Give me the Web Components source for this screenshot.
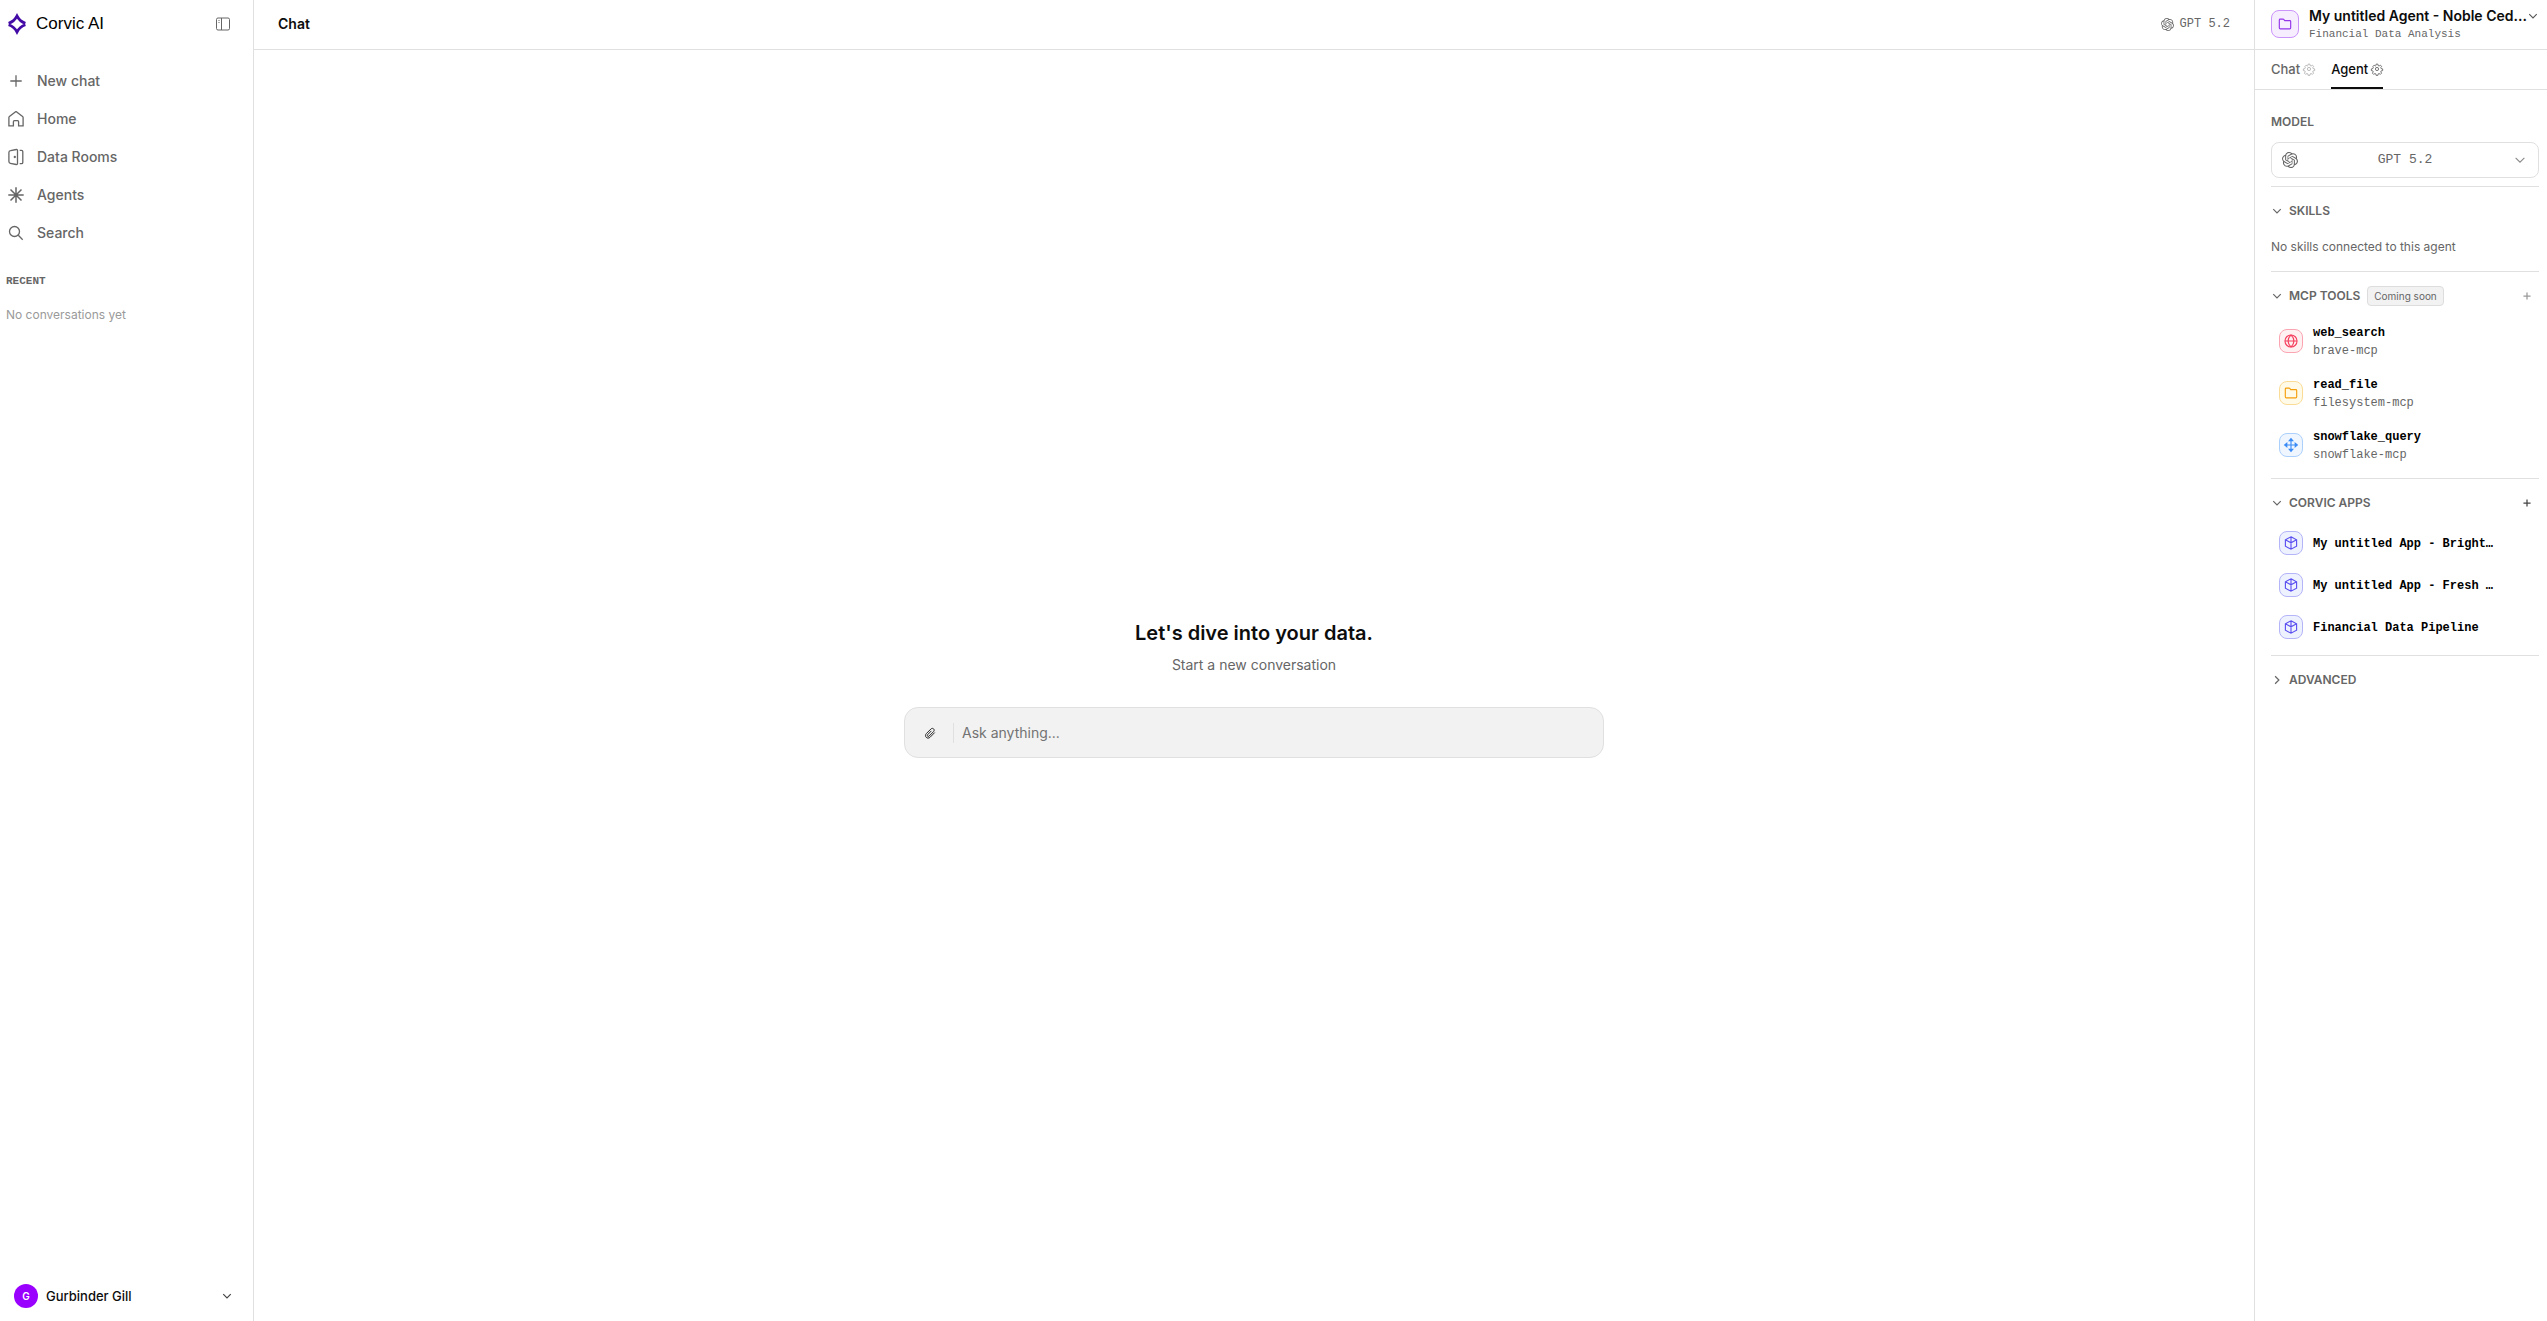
<!DOCTYPE html>
<html lang="en">
<head>
<meta charset="utf-8">
<meta name="viewport" content="width=device-width, initial-scale=1">
<title>Corvic AI</title>
<style>
  :root {
    --ink: #0d0d0d;
    --muted: #666;
    --faint: #9a9a9a;
    --line: #e0e0e0;
    --mono: "Liberation Mono", monospace;
  }
  body {
    margin: 0;
    color: var(--ink);
    background: #fff;
    font-family: Inter, "Liberation Sans", sans-serif;
    font-size: 14px;
    line-height: 20px;
  }
</style>
</head>
<body>
<corvic-app></corvic-app>

<script>
const OPENAI = `<path fill="currentColor" stroke="none" d="M22.2819 9.8211a5.9847 5.9847 0 0 0-.5157-4.9108 6.0462 6.0462 0 0 0-6.5098-2.9A6.0651 6.0651 0 0 0 4.9807 4.1818a5.9847 5.9847 0 0 0-3.9977 2.9 6.0462 6.0462 0 0 0 .7427 7.0966 5.98 5.98 0 0 0 .511 4.9107 6.051 6.051 0 0 0 6.5146 2.9001A5.9847 5.9847 0 0 0 13.2599 24a6.0557 6.0557 0 0 0 5.7718-4.2058 5.9894 5.9894 0 0 0 3.9977-2.9001 6.0557 6.0557 0 0 0-.7475-7.0729zm-9.022 12.6081a4.4755 4.4755 0 0 1-2.8764-1.0408l.1419-.0804 4.7783-2.7582a.7948.7948 0 0 0 .3927-.6813v-6.7369l2.02 1.1686a.071.071 0 0 1 .038.052v5.5826a4.504 4.504 0 0 1-4.4945 4.4944zm-9.6607-4.1254a4.4708 4.4708 0 0 1-.5346-3.0137l.142.0852 4.783 2.7582a.7712.7712 0 0 0 .7806 0l5.8428-3.3685v2.3324a.0804.0804 0 0 1-.0332.0615L9.74 19.9502a4.4992 4.4992 0 0 1-6.1408-1.6464zM2.3408 7.8956a4.485 4.485 0 0 1 2.3655-1.9728V11.6a.7664.7664 0 0 0 .3879.6765l5.8144 3.3543-2.0201 1.1685a.0757.0757 0 0 1-.071 0l-4.8303-2.7865A4.504 4.504 0 0 1 2.3408 7.872zm16.5963 3.8558L13.1038 8.364 15.1192 7.2a.0757.0757 0 0 1 .071 0l4.8303 2.7913a4.4944 4.4944 0 0 1-.6765 8.1042v-5.6772a.79.79 0 0 0-.407-.667zm2.0107-3.0231l-.142-.0852-4.7735-2.7818a.7759.7759 0 0 0-.7854 0L9.409 9.2297V6.8974a.0662.0662 0 0 1 .0284-.0615l4.8303-2.7866a4.4992 4.4992 0 0 1 6.6802 4.66zM8.3065 12.863l-2.02-1.1638a.0804.0804 0 0 1-.038-.0567V6.0742a4.4992 4.4992 0 0 1 7.3757-3.4537l-.142.0805L8.704 5.459a.7948.7948 0 0 0-.3927.6813zm1.0976-2.3654l2.602-1.4998 2.6069 1.4998v2.9994l-2.5974 1.4997-2.6067-1.4997Z"/>`;

// [viewBox size, markup]
const ICONS = {
  logo: [20, `<g fill="none" stroke="#430ba5" stroke-width="2.7"><path d="M1.6 9.300C5.500 8 8 5.800 10 2c2 3.800 4.500 6 8.400 7.300"/><path d="M1.600 10.700C5.500 12 8 14.200 10 18c2-3.800 4.500-6 8.400-7.300"/></g>`],
  panel: [16, `<rect x="1.5" y="2" width="13" height="12" rx="1.5"/><path d="M6.5 2v12M3.5 4.5h1M3.5 6.5h1"/>`],
  plus: [16, `<path d="M8 2.3v11.4M2.3 8h11.4"/>`],
  home: [16, `<path d="M.9 14.9V6.6Q.9 6 1.4 5.6L7.3.9Q8 .4 8.7.9l5.9 4.7q.5.4.5 1v8.3h-4.5v-4.2q0-1-1-1H6.4q-1 0-1 1v4.200z"/>`],
  door: [16, `<path d="M2.600 1.700 8.300.5q1.200-.2 1.200 1v13q0 1.200-1.200 1L2.300 14.300Q.9 14 .9 12.600V3.400Q.9 2 2.600 1.700z"/><path d="M11.700 1.300h1.800q1.300 0 1.300 1.300v10.800q0 1.300-1.300 1.300h-1.800"/><circle cx="6.800" cy="8" r=".5" fill="currentColor"/>`],
  spark: [16, `<path stroke-width="1.5" d="M8 .3v15.400M.3 8h15.400M2.500 2.500l11 11M13.500 2.500l-11 11"/>`],
  search: [16, `<circle cx="6.500" cy="6.500" r="5"/><path d="m10.300 10.300 4.400 4.400"/>`],
  down: [16, `<path d="m3 5.500 5 5 5-5"/>`],
  right: [16, `<path d="m5.500 3 5 5-5 5"/>`],
  openai: [24, OPENAI],
  gear: [24, `<circle cx="12" cy="12" r="3.200"/><path d="M10.300 2.200h3.400l.6 3 1.900.8 2.600-1.700 2.400 2.400-1.700 2.600.8 1.900 3 .6v3.400l-3 .6-.8 1.900 1.700 2.600-2.400 2.400-2.600-1.700-1.900.8-.6 3h-3.400l-.6-3-1.900-.8-2.600 1.700-2.400-2.400 1.700-2.600-.8-1.900-3-.6v-3.400l3-.6.8-1.900L3.800 6.700l2.400-2.400L8.800 6l.9-.8z" stroke-linejoin="round"/>`],
  folder: [16, `<path d="M1.500 12.300V3.400q0-1 1-1h3.300q.5 0 .8.4l1.100 1.400h5.800q1 0 1 1v7.100q0 1.300-1 1.300h-11q-1 0-1-1.300z"/>`],
  globe: [16, `<circle cx="8" cy="8" r="6.900"/><path d="M1.100 8h13.800M8 1.100c4.200 4.300 4.200 9.500 0 13.800M8 1.100c-4.200 4.300-4.200 9.500 0 13.800"/>`],
  arrows: [16, `<path d="M8 2v12M2 8h12"/><path fill="currentColor" d="m8 .8 2 2.400H6zM8 15.200l2-2.400H6zM.8 8l2.400-2v4zM15.200 8l-2.400-2v4z"/>`],
  cube: [16, `<path d="M8 .9 14.400 4.300v7.400L8 15.100 1.600 11.700V4.300zM1.600 4.300 8 7.800l6.400-3.500M8 .9v14.200"/>`],
  clip: [16, `<path d="m14.300 7.400-6.100 6.200c-3.700 3.500-8.500-1.200-5-4.900l6-6c2.500-2.500 6 .9 3.500 3.500l-5.900 5.900c-1.500 1.400-3.300-.4-1.900-1.900l4.900-5"/>`]
};

function define(name, html, setup) {
  const template = document.createElement("template");
  template.innerHTML = `<style>*, *::before, *::after { box-sizing: border-box; }</style>` + html;
  customElements.define(name, class extends HTMLElement {
    constructor() {
      super();
      this.attachShadow({ mode: "open" }).append(template.content.cloneNode(true));
    }
    connectedCallback() {
      if (setup) setup(this, this.shadowRoot);
    }
  });
}

// <ui-icon name="plus">, sized with --icon, weighted with --weight
define("ui-icon", `
  <style>
    :host { display: inline-flex; flex: none; width: var(--icon, 16px); height: var(--icon, 16px); }
    svg { width: 100%; height: 100%; overflow: visible; stroke-width: var(--weight, 1.3); }
  </style>
  <svg fill="none" stroke="currentColor" aria-hidden="true"></svg>
`, (el, root) => {
  const [size, markup] = ICONS[el.getAttribute("name")];
  const svg = root.querySelector("svg");
  svg.setAttribute("viewBox", `0 0 ${size} ${size}`);
  svg.innerHTML = markup;
});

define("icon-tile", `
  <style>
    :host {
      display: inline-flex; align-items: center; justify-content: center; flex: none; box-sizing: border-box;
      width: 24px; height: 24px; border: 1px solid; border-radius: 8px;
      --icon: 14px; --weight: 1.3;
    }
    :host([tone="red"]) { color: #f43f5e; background: #fff0f1; border-color: #fba5b2; }
    :host([tone="amber"]) { color: #f59e0b; background: #fffbe8; border-color: #fbdc96; }
    :host([tone="blue"]) { color: #3b8bf6; background: #eff6ff; border-color: #acd0fc; }
    :host([tone="indigo"]) { color: #5b50f0; background: #eef2ff; border-color: #b4b4f8; }
    :host([tone="purple"]) { color: #9333ea; background: #f6eeff; border-color: #cb94fa; }
    :host([size="large"]) { width: 28px; height: 28px; }
  </style>
  <slot></slot>
`);

define("nav-item", `
  <style>
    :host { display: block; }
    a {
      display: flex; align-items: center; gap: 13px; height: 38px; padding: 0 8px;
      color: var(--muted); font-weight: 500; text-decoration: none;
    }
    a:hover { color: var(--ink); }
  </style>
  <a href="#"><slot name="icon"></slot><slot></slot></a>
`);

define("side-bar", `
  <style>
    :host { display: flex; flex-direction: column; box-sizing: border-box; border-right: 1px solid var(--line); }
    header { display: flex; align-items: center; justify-content: space-between; height: 48px; padding: 0 22px 0 7px; }
    .brand { display: flex; align-items: center; gap: 9px; color: #000; font: 17px/24px "Liberation Sans", sans-serif; text-decoration: none; --icon: 20px; }
    button { border: 0; padding: 0; background: none; font: inherit; color: inherit; cursor: pointer; }
    .toggle { display: flex; color: var(--muted); --weight: 1; }
    nav { padding-top: 14px; }
    h2 { margin: 21px 6px 0; font: bold 11px/16px var(--mono); color: var(--muted); }
    p { margin: 17px 6px 0; font-size: 12px; line-height: 18px; color: var(--faint); }
    .user {
      display: flex; align-items: center; gap: 8px; margin-top: auto; padding: 12px 20px 13px 14px;
      font-size: 13px; line-height: 18px; font-weight: 500; text-align: left; --icon: 12px; --weight: 1.6;
    }
    .user span { flex: 1; }
    .user i {
      display: grid; place-items: center; width: 24px; height: 24px; border-radius: 50%;
      background: #9a00ff; color: #fff; font-style: normal; font-size: 10px; font-weight: 600;
    }
    .user ui-icon { color: #444; }
  </style>
  <header>
    <a class="brand" href="#"><ui-icon name="logo"></ui-icon>Corvic AI</a>
    <button class="toggle" aria-label="Toggle sidebar"><ui-icon name="panel"></ui-icon></button>
  </header>
  <nav>
    <nav-item><ui-icon slot="icon" name="plus"></ui-icon>New chat</nav-item>
    <nav-item><ui-icon slot="icon" name="home"></ui-icon>Home</nav-item>
    <nav-item><ui-icon slot="icon" name="door"></ui-icon>Data Rooms</nav-item>
    <nav-item><ui-icon slot="icon" name="spark"></ui-icon>Agents</nav-item>
    <nav-item><ui-icon slot="icon" name="search"></ui-icon>Search</nav-item>
  </nav>
  <h2>RECENT</h2>
  <p>No conversations yet</p>
  <button class="user"><i>G</i><span>Gurbinder Gill</span><ui-icon name="down"></ui-icon></button>
`);

define("chat-view", `
  <style>
    :host { display: flex; flex-direction: column; min-width: 0; }
    header {
      display: flex; align-items: center; justify-content: space-between;
      height: 50px; padding: 0 24px 1px; border-bottom: 1px solid var(--line);
    }
    h1 { margin: 0; font-size: 14px; line-height: 20px; font-weight: 600; }
    .model { display: flex; align-items: center; gap: 6px; font: 12px/16px var(--mono); color: var(--muted); --icon: 13px; }
    section { flex: 1; display: flex; flex-direction: column; align-items: center; justify-content: center; padding: 2px 24px 0; }
    h2 { margin: 0; font-size: 20px; line-height: 36px; font-weight: 600; }
    p { margin: 4px 0 32px; color: var(--muted); }
    form {
      display: flex; align-items: center; width: 100%; max-width: 700px; height: 51px; padding: 0 16px;
      border: 1px solid var(--line); border-radius: 14px; background: #f2f2f2;
    }
    button { display: flex; padding: 3px; border: 0; background: none; color: #222; --icon: 12px; --weight: 1.3; }
    input {
      flex: 1; height: 20px; margin-left: 14px; padding: 0 8px; border: 0; border-left: 1px solid var(--line);
      background: none; font: inherit; color: inherit; outline: 0;
    }
    input::placeholder { color: #737373; opacity: 1; }
  </style>
  <header>
    <h1>Chat</h1>
    <div class="model"><ui-icon name="openai"></ui-icon>GPT 5.2</div>
  </header>
  <section>
    <h2>Let's dive into your data.</h2>
    <p>Start a new conversation</p>
    <form>
      <button type="button" aria-label="Attach file"><ui-icon name="clip"></ui-icon></button>
      <input type="text" aria-label="Message" placeholder="Ask anything...">
    </form>
  </section>
`);

define("panel-section", `
  <style>
    :host { display: block; padding-top: 12px; border-top: 1px solid var(--line); color: var(--muted); }
    header { display: flex; align-items: center; height: 24px; padding-right: 7px; }
    button { display: flex; align-items: center; border: 0; padding: 0; background: none; font: inherit; color: inherit; cursor: pointer; }
    .toggle { gap: 6px; font-size: 12px; font-weight: 600; --icon: 12px; --weight: 1.6; }
    .arrow { display: flex; }
    .add { margin-left: auto; color: #444; --icon: 10px; --weight: 2; }
    :host([locked]) .add { color: #999; }
    .body { padding: 7px 0; }
    :host([collapsed]) .body { display: none; }
  </style>
  <header>
    <button class="toggle"><span class="arrow"></span><slot name="title"></slot></button>
    <slot name="badge"></slot>
    <button class="add" aria-label="Add"><ui-icon name="plus"></ui-icon></button>
  </header>
  <div class="body"><slot></slot></div>
`, (el, root) => {
  const toggle = root.querySelector(".toggle");
  const draw = () => {
    const closed = el.hasAttribute("collapsed");
    root.querySelector(".arrow").innerHTML = `<ui-icon name="${closed ? "right" : "down"}"></ui-icon>`;
    toggle.setAttribute("aria-expanded", !closed);
  };
  if (!el.hasAttribute("add")) root.querySelector(".add").remove();
  toggle.onclick = () => {
    el.toggleAttribute("collapsed");
    draw();
  };
  draw();
});

define("tool-row", `
  <style>
    :host { display: flex; align-items: center; gap: 10px; box-sizing: border-box; height: 42px; padding: 0 44px 0 8px; font: 12px/18px var(--mono); }
    :host([tall]) { height: 52px; }
    div { min-width: 0; padding-top: 2px; }
    .name { display: block; color: #000; font-weight: bold; white-space: nowrap; }
    .from { display: block; color: var(--muted); }
  </style>
  <slot name="icon"></slot>
  <div><span class="name"><slot></slot></span><span class="from"><slot name="from"></slot></span></div>
`);

define("agent-panel", `
  <style>
    :host { display: block; box-sizing: border-box; border-left: 1px solid var(--line); }
    .head { display: flex; align-items: center; gap: 10px; height: 50px; padding: 0 8px 1px 16px; border-bottom: 1px solid var(--line); }
    .head > div { flex: 1; min-width: 0; }
    .name { display: flex; align-items: center; justify-content: space-between; width: 100%; border: 0; padding: 0; background: none; color: var(--ink); font: inherit; font-weight: 600; white-space: nowrap; --icon: 12px; --weight: 1.5; }
    .name ui-icon { color: #555; }
    .kind { display: block; font: 11px/16px var(--mono); color: var(--muted); }
    nav { display: flex; gap: 16px; height: 40px; padding: 0 16px; border-bottom: 1px solid var(--line); }
    nav a {
      display: flex; align-items: center; gap: 3px; border-bottom: 2px solid transparent;
      font-size: 13px; font-weight: 500; color: var(--muted); text-decoration: none; --icon: 12px; --weight: 1.6;
    }
    nav a ui-icon { color: #aaa; }
    nav .on { color: var(--ink); border-bottom-color: var(--ink); }
    nav .on ui-icon { color: #555; }
    main { padding: 24px 8px 0 16px; }
    label { display: block; margin-bottom: 12px; font-size: 12px; line-height: 16px; font-weight: 600; color: var(--muted); }
    .select { display: grid; grid-template: 36px / 38px 1fr 38px; align-items: center; justify-items: center; margin-bottom: 8px; color: var(--muted); }
    .select ui-icon { grid-area: 1 / 1; pointer-events: none; }
    .select .chevron { grid-area: 1 / 3; color: #888; --icon: 14px; --weight: 1.2; }
    select {
      grid-area: 1 / 1 / 2 / 4; width: 100%; height: 36px; padding: 0 36px; border: 1px solid var(--line); border-radius: 8px;
      background: none; appearance: none; font: 13px/20px var(--mono); color: inherit; text-align-last: center;
    }
    p { margin: 0; padding: 8px 0; font-size: 12px; line-height: 18px; }
    .badge { margin-left: 7px; padding: 0 6px; border: 1px solid #ddd; border-radius: 4px; background: #f2f2f2; font-size: 10px; line-height: 18px; }
  </style>
  <div class="head">
    <icon-tile tone="purple" size="large"><ui-icon name="folder"></ui-icon></icon-tile>
    <div>
      <button class="name">My untitled Agent - Noble Ced...<ui-icon name="down"></ui-icon></button>
      <span class="kind">Financial Data Analysis</span>
    </div>
  </div>
  <nav>
    <a href="#">Chat<ui-icon name="gear"></ui-icon></a>
    <a class="on" href="#">Agent<ui-icon name="gear"></ui-icon></a>
  </nav>
  <main>
    <label for="model">MODEL</label>
    <div class="select">
      <select id="model"><option>GPT 5.2</option></select>
      <ui-icon name="openai"></ui-icon>
      <ui-icon class="chevron" name="down"></ui-icon>
    </div>
    <panel-section>
      <span slot="title">SKILLS</span>
      <p>No skills connected to this agent</p>
    </panel-section>
    <panel-section add locked>
      <span slot="title">MCP TOOLS</span>
      <span slot="badge" class="badge">Coming soon</span>
      <tool-row tall>
        <icon-tile slot="icon" tone="red"><ui-icon name="globe"></ui-icon></icon-tile>
        web_search<span slot="from">brave-mcp</span>
      </tool-row>
      <tool-row tall>
        <icon-tile slot="icon" tone="amber"><ui-icon name="folder"></ui-icon></icon-tile>
        read_file<span slot="from">filesystem-mcp</span>
      </tool-row>
      <tool-row tall>
        <icon-tile slot="icon" tone="blue"><ui-icon name="arrows"></ui-icon></icon-tile>
        snowflake_query<span slot="from">snowflake-mcp</span>
      </tool-row>
    </panel-section>
    <panel-section add>
      <span slot="title">CORVIC APPS</span>
      <tool-row>
        <icon-tile slot="icon" tone="indigo"><ui-icon name="cube"></ui-icon></icon-tile>
        My untitled App - Bright…
      </tool-row>
      <tool-row>
        <icon-tile slot="icon" tone="indigo"><ui-icon name="cube"></ui-icon></icon-tile>
        My untitled App - Fresh …
      </tool-row>
      <tool-row>
        <icon-tile slot="icon" tone="indigo"><ui-icon name="cube"></ui-icon></icon-tile>
        Financial Data Pipeline
      </tool-row>
    </panel-section>
    <panel-section collapsed>
      <span slot="title">ADVANCED</span>
    </panel-section>
  </main>
`);

define("corvic-app", `
  <style>
    :host { display: grid; grid-template-columns: 254px minmax(0, 1fr) 293px; min-height: 100vh; }
  </style>
  <side-bar></side-bar>
  <chat-view></chat-view>
  <agent-panel></agent-panel>
`);
</script>
</body>
</html>
